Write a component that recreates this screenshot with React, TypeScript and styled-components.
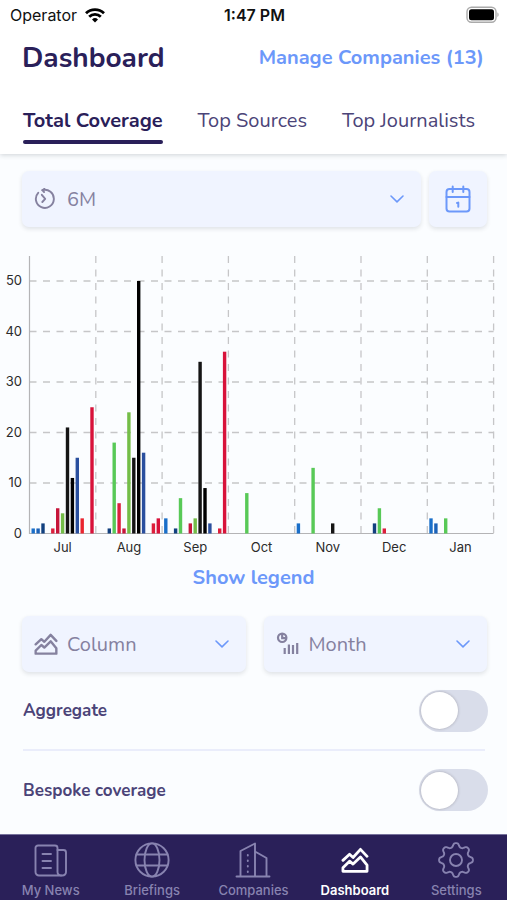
import React, { useState } from "react";
import styled, { createGlobalStyle } from "styled-components";

const ui = `Nunito, Lato, sans-serif`;
const system = `Inter, "Liberation Sans", sans-serif`;

const color = {
  navy: "#2a2059",
  ink: "#4b4478",
  muted: "#85819f",
  blue: "#6c98fa",
  field: "#f0f4ff",
  page: "#fbfdff",
  rule: "#eaedfb",
  track: "#d9ddea",
  navIdle: "#8883b0",
};

const GlobalStyle = createGlobalStyle`
  *, *::before, *::after { box-sizing: border-box; }
  body { margin: 0; background: ${color.page}; font-family: ${ui}; }
  button, select, input { font: inherit; margin: 0; }
`;

const Screen = styled.div`
  display: flex;
  flex-direction: column;
  min-height: 100vh;
`;

const Header = styled.header`
  position: relative;
  background: #fff;
  box-shadow: 0 1px 5px rgba(30, 40, 50, 0.2);
`;

const StatusBar = styled.div`
  display: grid;
  grid-template-columns: 1fr auto 1fr;
  align-items: center;
  height: 30px;
  padding: 0 8px 0 10px;
  font-family: ${system};
  font-size: 16px;
  color: #111;
`;

const Carrier = styled.span`
  display: flex;
  align-items: center;
  gap: 8px;
`;

const Clock = styled.span`
  font-weight: 600;
`;

const BatterySlot = styled.span`
  display: flex;
  justify-content: flex-end;
`;

const TitleRow = styled.div`
  display: flex;
  align-items: center;
  justify-content: space-between;
  height: 56px;
  padding: 0 23px 0 22px;
`;

const Title = styled.h1`
  margin: 0;
  font-size: 28px;
  line-height: 36px;
  font-weight: 700;
  color: ${color.navy};
`;

const TextButton = styled.button`
  border: 0;
  padding: 0;
  background: none;
  font-size: 20px;
  line-height: 28px;
  font-weight: 700;
  color: ${color.blue};
  cursor: pointer;
`;

const Tabs = styled.div`
  display: flex;
  justify-content: space-between;
  padding: 21px 32px 10px 23px;
`;

const Tab = styled.button<{ $active: boolean }>`
  display: flex;
  flex-direction: column;
  gap: 5px;
  border: 0;
  padding: 0;
  background: none;
  font-size: 20px;
  line-height: 28px;
  font-weight: ${(p) => (p.$active ? 700 : 400)};
  color: ${(p) => (p.$active ? color.navy : color.ink)};
  cursor: pointer;

  &::after {
    content: "";
    align-self: stretch;
    height: 4px;
    border-radius: 2px;
    background: ${(p) => (p.$active ? color.navy : "transparent")};
  }
`;

const Main = styled.main`
  flex: 1;
  display: flex;
  flex-direction: column;
  padding-top: 17px;
`;

const FieldRow = styled.div<{ $gap: number }>`
  display: flex;
  gap: ${(p) => p.$gap}px;
  padding: 0 20px 0 22px;
`;

const cardShadow = `0 2px 4px rgba(40, 50, 60, 0.13)`;

const Field = styled.label`
  position: relative;
  flex: 1;
  min-width: 0;
  display: flex;
  align-items: center;
  color: ${color.muted};
`;

const FieldIcon = styled.span`
  position: absolute;
  left: 12px;
  display: flex;
  pointer-events: none;
`;

const FieldChevron = styled.span`
  position: absolute;
  right: 16px;
  display: flex;
  pointer-events: none;
`;

const Select = styled.select`
  appearance: none;
  width: 100%;
  height: 56px;
  border: 0;
  border-radius: 7px;
  padding: 0 40px 0 45px;
  background: ${color.field};
  box-shadow: ${cardShadow};
  font-size: 20px;
  color: ${color.muted};
`;

const IconButton = styled.button`
  display: flex;
  align-items: center;
  justify-content: center;
  width: 58px;
  height: 56px;
  border: 0;
  border-radius: 7px;
  padding: 0;
  background: ${color.field};
  box-shadow: ${cardShadow};
  color: ${color.blue};
  cursor: pointer;
`;

const ChartBox = styled.div`
  padding: 23px 0 8px;

  svg {
    display: block;
    width: 100%;
    height: auto;
  }
`;

const LegendRow = styled.div`
  display: flex;
  justify-content: center;
  padding-bottom: 24px;
`;

const ToggleList = styled.div`
  padding: 0 22px 0 23px;
`;

const ToggleRow = styled.label`
  display: flex;
  align-items: center;
  justify-content: space-between;
  height: 77px;
  font-size: 17px;
  font-weight: 700;
  color: ${color.ink};

  & + & {
    height: 80px;
    border-top: 2px solid ${color.rule};
  }
`;

const Switch = styled.input`
  appearance: none;
  display: flex;
  align-items: center;
  width: 69px;
  height: 42px;
  margin-right: -3px;
  border-radius: 21px;
  padding: 0 2px;
  background: ${color.track};
  cursor: pointer;

  &::before {
    content: "";
    width: 37px;
    height: 37px;
    border-radius: 50%;
    background: #fff;
    box-shadow: 0 0 3px rgba(40, 30, 40, 0.3);
  }

  &:checked {
    justify-content: flex-end;
    background: ${color.blue};
  }
`;

const BottomNav = styled.nav`
  display: grid;
  grid-template-columns: repeat(5, 1fr);
  height: 66px;
  border-top: 1px solid #77729c;
  background: ${color.navy};
`;

const NavLink = styled.a<{ $active: boolean }>`
  display: flex;
  flex-direction: column;
  align-items: center;
  gap: 3px;
  padding-top: 6px;
  font-family: ${system};
  font-size: 13px;
  line-height: 16px;
  font-weight: ${(p) => (p.$active ? 600 : 500)};
  color: ${(p) => (p.$active ? "#fff" : color.navIdle)};
  text-decoration: none;
  white-space: nowrap;
`;

const NavIconBox = styled.span`
  display: flex;
  align-items: center;
  justify-content: center;
  height: 38px;
`;

type IconProps = { size: number; width?: number };

const Icon = ({ size, width = 2, children }: IconProps & { children: React.ReactNode }) => (
  <svg
    width={size}
    height={size}
    viewBox="0 0 36 36"
    fill="none"
    stroke="currentColor"
    strokeWidth={width}
    strokeLinecap="round"
    strokeLinejoin="round"
    aria-hidden="true"
  >
    {children}
  </svg>
);

const WifiIcon = () => (
  <svg width="20" height="15" viewBox="0 0 20 15" fill="none" stroke="#000" strokeWidth="2.8" aria-hidden="true">
    <path d="M1 5.2a13 13 0 0 1 18 0" />
    <path d="M4.2 8.8a8.3 8.3 0 0 1 11.6 0" />
    <path d="M10 14.6l-3-3.1a4.3 4.3 0 0 1 6 0z" fill="#000" stroke="none" />
  </svg>
);

const BatteryIcon = () => (
  <svg width="34" height="18" viewBox="0 0 34 18" aria-hidden="true">
    <rect x="2" y="1.2" width="29" height="15" rx="4.5" fill="none" stroke="#aaa" strokeWidth="1.4" />
    <rect x="4" y="3.2" width="25" height="11" rx="2.5" fill="#000" />
    <path d="M32.4 6.6v4.400c1.600-.6 1.600-3.800 0-4.400z" fill="#aaa" />
  </svg>
);

const ChevronIcon = () => (
  <svg width="16" height="10" viewBox="0 0 16 10" fill="none" stroke={color.blue} strokeWidth="1.6" strokeLinecap="round" strokeLinejoin="round" aria-hidden="true">
    <path d="M2 2l6 5.8L14 2" />
  </svg>
);

const HistoryIcon = () => (
  <svg width="22" height="22" viewBox="0 0 22 22" fill="none" stroke="currentColor" strokeWidth="1.9" strokeLinecap="round" strokeLinejoin="round" aria-hidden="true">
    <path d="M8.400 2.200A9 9 0 1 1 4.200 4.800" />
    <path d="M10.400.9L8.400 2.200l1.700 1.900" />
    <path d="M7.800 6.800l3.400 4-2.900 3.200" />
  </svg>
);

const CalendarIcon = () => (
  <svg width="26" height="28" viewBox="0 0 26 28" fill="none" stroke="currentColor" strokeWidth="2" strokeLinecap="round" strokeLinejoin="round" aria-hidden="true">
    <rect x="1.500" y="4" width="23" height="22.500" rx="3" />
    <path d="M1.500 12h23M7.700 1.500v5.500M18.300 1.500v5.500" />
    <path d="M12 18l1.300-.4v4.200" />
  </svg>
);

const AreaIcon = ({ size, width }: IconProps) => (
  <Icon size={size} width={width}>
    <path d="M2.500 18.500L11 10.700l4.500 4L25 4.300l8.500 9" />
    <path d="M2.500 32.500v-4.500L11 19.500l4.500 3.800 9.500-9.300 8.500 10.500v8z" />
  </Icon>
);

const ReportIcon = () => (
  <svg width="24" height="24" viewBox="0 0 24 24" fill="none" stroke="currentColor" strokeWidth="2.2" aria-hidden="true">
    <circle cx="6.200" cy="5.800" r="4.200" />
    <path d="M6.200 2v4.200h4" />
    <path d="M8.700 16v6M12.900 12.500v9.500M17 13v9M21.200 11v11" />
  </svg>
);

const NewsIcon = () => (
  <Icon size={36} width={1.9}>
    <path d="M5 3.500h17a2.500 2.500 0 0 1 2.500 2.500v24a3.500 3.500 0 0 0 3.500 3.500H6A3.500 3.500 0 0 1 2.500 30V6A2.500 2.500 0 0 1 5 3.500z" />
    <path d="M24.500 8h6a2.500 2.500 0 0 1 2.500 2.500V30a3.500 3.500 0 0 1-3.500 3.500H28" />
    <path d="M9.500 12h8.500M9.500 19h8.500M9.500 26h8.500" />
  </Icon>
);

const GlobeIcon = () => (
  <Icon size={36} width={1.9}>
    <circle cx="18" cy="18" r="16.600" />
    <ellipse cx="18" cy="18" rx="7.500" ry="16.600" />
    <path d="M2.500 12.500h31M2.500 23.500h31" />
  </Icon>
);

const BuildingIcon = () => (
  <Icon size={36} width={1.9}>
    <path d="M1.500 34.500h33M5.500 34.500V9L20 1.500v33M20 9.500L31.500 16v18.500" />
    <path d="M12.800 13v17" strokeDasharray="0.500 5" />
  </Icon>
);

/* Eight-lobed outline generated from a smooth radial wave. */
const gearPath = (() => {
  const steps = 160;
  const points: string[] = [];
  for (let i = 0; i < steps; i += 1) {
    const angle = (i / steps) * Math.PI * 2;
    const wave = Math.tanh(1.4 * Math.cos(angle * 8)) / Math.tanh(1.4);
    const radius = 15 + 1.9 * wave;
    points.push(`${(18 + radius * Math.sin(angle)).toFixed(2)} ${(18 - radius * Math.cos(angle)).toFixed(2)}`);
  }
  return `M${points.join("L")}Z`;
})();

const GearIcon = () => (
  <Icon size={36} width={1.9}>
    <path d={gearPath} />
    <circle cx="18" cy="18" r="6" />
  </Icon>
);

const seriesColors = [
  "#1a6fc9", "#1b62b8", "#12407f", "#58c957", "#dc1f3c", "#c6153a", "#74bd48",
  "#151515", "#000000", "#2a4f9e", "#e9242f", "#dd1f3b", "#d8123a",
];

const coverage: { month: string; values: number[] }[] = [
  { month: "Jul", values: [1, 1, 2, 0, 1, 5, 4, 21, 11, 15, 3, 0, 25] },
  { month: "Aug", values: [0, 0, 1, 18, 6, 1, 24, 15, 50, 16, 0, 2, 3] },
  { month: "Sep", values: [3, 0, 1, 7, 0, 2, 3, 34, 9, 2, 0, 1, 36] },
  { month: "Oct", values: [0, 0, 0, 8, 0, 0, 0, 0, 0, 0, 0, 0, 0] },
  { month: "Nov", values: [2, 0, 0, 13, 0, 0, 0, 2, 0, 0, 0, 0, 0] },
  { month: "Dec", values: [0, 0, 2, 5, 1, 0, 0, 0, 0, 0, 0, 0, 0] },
  { month: "Jan", values: [3, 2, 0, 3, 0, 0, 0, 0, 0, 0, 0, 0, 0] },
];

const plot = { left: 29.5, top: 6, bottom: 283.5, month: 66.3, slot: 4.9, unit: 5.05, bar: 3.4 };
const plotRight = plot.left + plot.month * coverage.length;

const CoverageChart = () => (
  <svg viewBox="0 0 507 306" role="img" aria-label="Total coverage by month" fontFamily={system} fontSize="13" fill="#2b2b2b">
    <g stroke="#c6c6c8" strokeWidth="1.3" strokeDasharray="7 6.5">
      {[10, 20, 30, 40, 50].map((tick) => {
        const y = plot.bottom - tick * plot.unit;
        return <line key={tick} x1={plot.left} x2={plotRight} y1={y} y2={y} />;
      })}
      {coverage.map(({ month }, i) => {
        const x = plot.left + plot.month * (i + 1);
        return <line key={month} x1={x} x2={x} y1={plot.top} y2={plot.bottom} />;
      })}
    </g>
    <path d={`M${plot.left} ${plot.top}V${plot.bottom}H${plotRight}`} fill="none" stroke="#b4b4b6" strokeWidth="1.2" />
    {[0, 10, 20, 30, 40, 50].map((tick) => (
      <text key={tick} x="22" y={plot.bottom - tick * plot.unit + 4} textAnchor="end">
        {tick}
      </text>
    ))}
    {coverage.map(({ month, values }, i) => (
      <g key={month}>
        {values.map((value, slot) =>
          value > 0 ? (
            <rect
              key={slot}
              x={plot.left + plot.month * i + 2 + plot.slot * slot}
              y={plot.bottom - value * plot.unit}
              width={plot.bar}
              height={value * plot.unit}
              fill={seriesColors[slot]}
            />
          ) : null,
        )}
        <text x={plot.left + plot.month * (i + 0.5)} y="302" textAnchor="middle">
          {month}
        </text>
      </g>
    ))}
  </svg>
);

type SelectFieldProps = { label: string; icon: React.ReactNode; options: string[] };

const SelectField = ({ label, icon, options }: SelectFieldProps) => (
  <Field>
    <Select aria-label={label} defaultValue={options[0]}>
      {options.map((option) => (
        <option key={option}>{option}</option>
      ))}
    </Select>
    <FieldIcon>{icon}</FieldIcon>
    <FieldChevron>
      <ChevronIcon />
    </FieldChevron>
  </Field>
);

const tabs = ["Total Coverage", "Top Sources", "Top Journalists"];

const navItems = [
  { label: "My News", icon: <NewsIcon /> },
  { label: "Briefings", icon: <GlobeIcon /> },
  { label: "Companies", icon: <BuildingIcon /> },
  { label: "Dashboard", icon: <AreaIcon size={28} width={3.6} /> },
  { label: "Settings", icon: <GearIcon /> },
];

export default function App() {
  const [activeTab, setActiveTab] = useState(tabs[0]);

  return (
    <Screen>
      <GlobalStyle />
      <Header>
        <StatusBar>
          <Carrier>
            Operator <WifiIcon />
          </Carrier>
          <Clock>1:47 PM</Clock>
          <BatterySlot>
            <BatteryIcon />
          </BatterySlot>
        </StatusBar>
        <TitleRow>
          <Title>Dashboard</Title>
          <TextButton type="button">Manage Companies (13)</TextButton>
        </TitleRow>
        <Tabs role="tablist">
          {tabs.map((tab) => (
            <Tab
              key={tab}
              type="button"
              role="tab"
              aria-selected={tab === activeTab}
              $active={tab === activeTab}
              onClick={() => setActiveTab(tab)}
            >
              {tab}
            </Tab>
          ))}
        </Tabs>
      </Header>
      <Main>
        <FieldRow $gap={8}>
          <SelectField label="Period" icon={<HistoryIcon />} options={["6M", "3M", "1M"]} />
          <IconButton type="button" aria-label="Pick dates">
            <CalendarIcon />
          </IconButton>
        </FieldRow>
        <ChartBox>
          <CoverageChart />
        </ChartBox>
        <LegendRow>
          <TextButton type="button">Show legend</TextButton>
        </LegendRow>
        <FieldRow $gap={18}>
          <SelectField label="Chart type" icon={<AreaIcon size={24} width={3.6} />} options={["Column", "Line"]} />
          <SelectField label="Interval" icon={<ReportIcon />} options={["Month", "Week"]} />
        </FieldRow>
        <ToggleList>
          <ToggleRow>
            Aggregate
            <Switch type="checkbox" role="switch" />
          </ToggleRow>
          <ToggleRow>
            Bespoke coverage
            <Switch type="checkbox" role="switch" />
          </ToggleRow>
        </ToggleList>
      </Main>
      <BottomNav>
        {navItems.map(({ label, icon }) => (
          <NavLink key={label} href="#" $active={label === "Dashboard"}>
            <NavIconBox>{icon}</NavIconBox>
            {label}
          </NavLink>
        ))}
      </BottomNav>
    </Screen>
  );
}
